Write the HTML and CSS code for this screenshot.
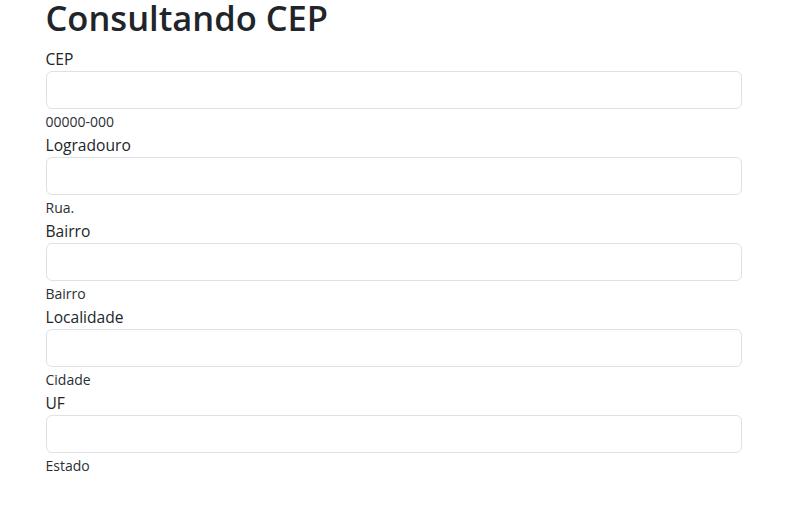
FILE: index.html
```html
<!DOCTYPE html>
<html lang="pt-BR">
<head>
<meta charset="utf-8">
<title>Consultando CEP</title>
<link rel="stylesheet" href="styles.css">
</head>
<body>
<div class="container">
  <h1 class="title">Consultando CEP</h1>
  <form class="form">
    <div class="field">
      <label class="label" for="cep">CEP</label>
      <input class="control" id="cep" type="text">
      <small class="hint">00000-000</small>
    </div>
    <div class="field">
      <label class="label" for="logradouro">Logradouro</label>
      <input class="control" id="logradouro" type="text">
      <small class="hint">Rua.</small>
    </div>
    <div class="field">
      <label class="label" for="bairro">Bairro</label>
      <input class="control" id="bairro" type="text">
      <small class="hint">Bairro</small>
    </div>
    <div class="field">
      <label class="label" for="localidade">Localidade</label>
      <input class="control" id="localidade" type="text">
      <small class="hint">Cidade</small>
    </div>
    <div class="field">
      <label class="label" for="uf">UF</label>
      <input class="control" id="uf" type="text">
      <small class="hint">Estado</small>
    </div>
  </form>
</div>
</body>
</html>
```
FILE: styles.css
```css
* { box-sizing: border-box; }
html, body { margin: 0; padding: 0; background: #fff; }
body {
  font-family: "Open Sans", "Noto Sans", sans-serif;
  color: #212529;
  font-size: 16px;
  line-height: 1.5;
}
.container {
  width: 720px;
  margin: 0 auto;
  padding: 0 12px;
}
.title {
  font-size: 34.5px;
  font-weight: 600;
  line-height: 36px;
  margin: 0 0 11px;
}
.form { display: flex; flex-direction: column; }
.field { display: flex; flex-direction: column; height: 86px; }
.label { display: block; line-height: 24px; height: 24px; font-size: 15.6px; }
.control {
  display: block;
  width: 100%;
  height: 38px;
  padding: 6px 12px;
  font: inherit;
  color: #212529;
  background: #fff;
  border: 1px solid #dee2e6;
  border-radius: 6px;
  outline: none;
}
.hint {
  display: block;
  margin-top: 2px;
  font-size: 14px;
  line-height: 21px;
  color: #2b2f33;
}
```
